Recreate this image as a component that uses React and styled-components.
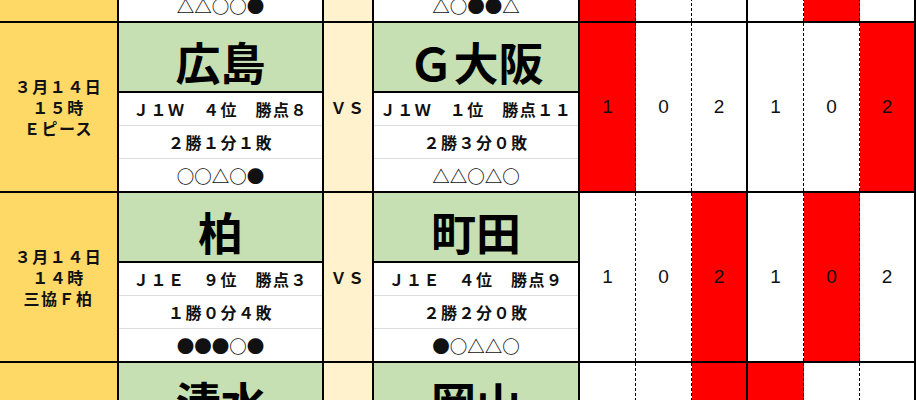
import styled, { createGlobalStyle } from "styled-components";

const GlobalStyle = createGlobalStyle`
  html, body {
    margin: 0;
    padding: 0;
    background: #fff;
    overflow: hidden;
  }
  body {
    font-family: "Noto Sans CJK JP", "Noto Sans", sans-serif;
    color: #111;
  }
`;

const matches = [
  {
    date: ["３月１４日", "１５時", "国立"],
    home: { name: "鹿島", info: "Ｊ１Ｅ　２位　勝点１０", record: "２勝２分０敗", form: "△△○○●" },
    away: { name: "浦和", info: "Ｊ１Ｅ　５位　勝点７", record: "１勝２分１敗", form: "△○●●△" },
    scores: [1, 0, 2, 1, 0, 2],
    red: [0, 4],
  },
  {
    date: ["３月１４日", "１５時", "Ｅピース"],
    home: { name: "広島", info: "Ｊ１Ｗ　４位　勝点８", record: "２勝１分１敗", form: "○○△○●" },
    away: { name: "Ｇ大阪", info: "Ｊ１Ｗ　１位　勝点１１", record: "２勝３分０敗", form: "△△○△○" },
    scores: [1, 0, 2, 1, 0, 2],
    red: [0, 5],
  },
  {
    date: ["３月１４日", "１４時", "三協Ｆ柏"],
    home: { name: "柏", info: "Ｊ１Ｅ　９位　勝点３", record: "１勝０分４敗", form: "●●●○●" },
    away: { name: "町田", info: "Ｊ１Ｅ　４位　勝点９", record: "２勝２分０敗", form: "●○△△○" },
    scores: [1, 0, 2, 1, 0, 2],
    red: [2, 4],
  },
  {
    date: ["３月１４日", "１４時", "アイスタ"],
    home: { name: "清水", info: "Ｊ１Ｗ　６位　勝点７", record: "２勝１分２敗", form: "○●△●○" },
    away: { name: "岡山", info: "Ｊ１Ｗ　８位　勝点５", record: "１勝２分２敗", form: "△●○△●" },
    scores: [1, 0, 2, 1, 0, 2],
    red: [2, 3],
  },
];

const Viewport = styled.div`
  height: 400px;
  overflow: hidden;
`;

const Sheet = styled.div`
  margin-top: -147px;
  display: flex;
  flex-direction: column;
  width: 916px;
`;

const Section = styled.div`
  display: grid;
  grid-template-columns: 119px 205px 50px 206px repeat(6, 56px);
  height: 170px;
  box-sizing: border-box;
  border-bottom: 2px solid #000;
`;

const DateCell = styled.div`
  background: #ffd966;
  border-right: 2px solid #000;
  display: flex;
  flex-direction: column;
  align-items: center;
  justify-content: center;
  font-size: 16px;
  font-weight: 700;
  letter-spacing: 1.5px;
`;

const DateLine = styled.div`
  height: 21px;
  line-height: 21px;
`;

const TeamCol = styled.div`
  display: grid;
  grid-template-rows: 70px 33px 33px 1fr;
  border-right: 2px solid #000;
  min-width: 0;
`;

const TeamName = styled.div`
  background: #c6e0b4;
  border-bottom: 2px solid #000;
  box-sizing: border-box;
  display: flex;
  align-items: center;
  justify-content: center;
  padding-top: 8px;
  font-size: 45px;
  font-weight: 700;
  line-height: 1;
  color: #000;
`;

const InfoRow = styled.div`
  display: flex;
  align-items: center;
  justify-content: center;
  box-sizing: border-box;
  border-bottom: ${(p) => (p.$last ? "none" : "1px solid #dcdcdc")};
  font-size: ${(p) => (p.$symbols ? "17.5px" : "16px")};
  letter-spacing: ${(p) => (p.$symbols ? "0" : "1.5px")};
  font-weight: 700;
  white-space: nowrap;
`;

const VsCell = styled.div`
  background: #fff2cc;
  border-right: 2px solid #000;
  display: flex;
  align-items: center;
  justify-content: center;
  font-size: 16px;
  font-weight: 700;
  letter-spacing: 1.5px;
`;

const ScoreCell = styled.div`
  background: ${(p) => (p.$red ? "#ff0000" : "#fff")};
  border-right: ${(p) => (p.$solid ? "2px solid #000" : "1px dashed #000")};
  display: flex;
  align-items: center;
  justify-content: center;
  font-family: "Liberation Sans", Arial, sans-serif;
  font-size: 19px;
  color: #111;
`;

const Team = ({ team }) => (
  <TeamCol>
    <TeamName>{team.name}</TeamName>
    <InfoRow>{team.info}</InfoRow>
    <InfoRow>{team.record}</InfoRow>
    <InfoRow $last $symbols>
      {team.form}
    </InfoRow>
  </TeamCol>
);

const App = () => {
  return (
    <>
      <GlobalStyle />
      <Viewport>
        <Sheet>
          {matches.map((m, i) => (
            <Section key={i}>
              <DateCell>
                {m.date.map((line) => (
                  <DateLine key={line}>{line}</DateLine>
                ))}
              </DateCell>
              <Team team={m.home} />
              <VsCell>ＶＳ</VsCell>
              <Team team={m.away} />
              {m.scores.map((s, j) => (
                <ScoreCell key={j} $red={m.red.includes(j)} $solid={j === 2 || j === 5}>
                  {s}
                </ScoreCell>
              ))}
            </Section>
          ))}
        </Sheet>
      </Viewport>
    </>
  );
};

export default App;
